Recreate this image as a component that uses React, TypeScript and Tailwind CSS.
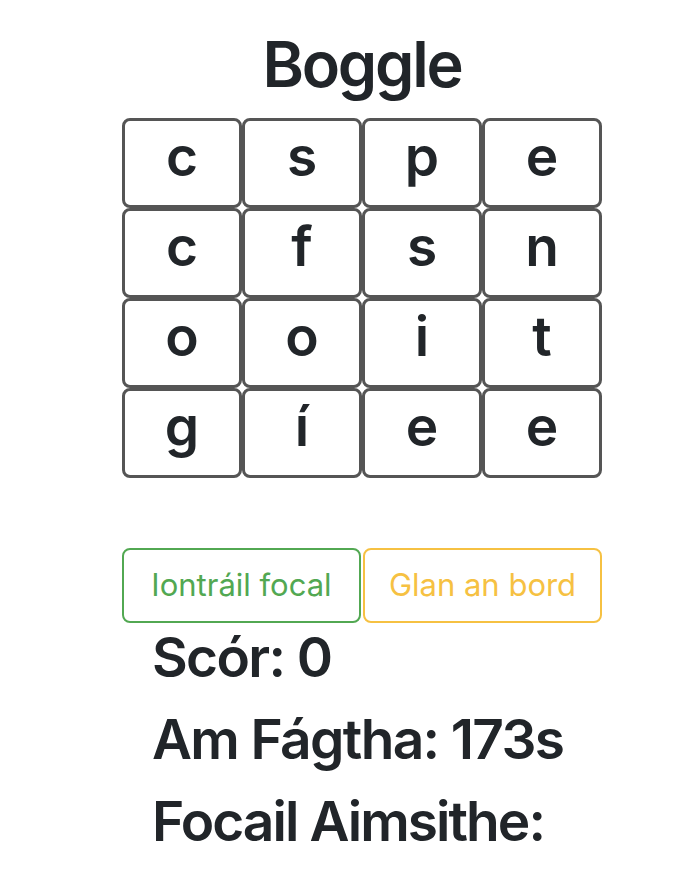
const letters = [
  ['c', 's', 'p', 'e'],
  ['c', 'f', 's', 'n'],
  ['o', 'o', 'i', 't'],
  ['g', 'í', 'e', 'e'],
];

export default function App() {
  return (
    <div className="min-h-screen bg-white text-[#212529] font-['Inter','Liberation_Sans',sans-serif]">
      <div className="ml-[122px] w-[480px] pt-[26px]">
        <h2 className="text-center text-[63px] leading-[77px] font-semibold tracking-[-0.035em] mb-[15px]">Boggle</h2>

        {/* board */}
        <div className="grid grid-cols-4">
          {letters.flat().map((l, i) => (
            <div
              key={i}
              className="h-[90px] border-[3px] border-[#555555] rounded-[8px] flex justify-center"
            >
              <span className="text-[55px] leading-[67px] font-semibold pt-[2px]">{l}</span>
            </div>
          ))}
        </div>

        <div className="grid grid-cols-2 gap-[2px] mt-[70px]">
          <button className="h-[75px] border-2 border-[#52a852] rounded-[8px] text-[#52a852] text-[31px]">
            Iontráil focal
          </button>
          <button className="h-[75px] border-2 border-[#f6c142] rounded-[8px] text-[#f6c142] text-[31px]">
            Glan an bord
          </button>
        </div>

        <div className="pl-[30px] pt-px">
          <h3 className="text-[55px] leading-[67px] font-semibold tracking-[-0.03em] mb-[15px]">Scór: 0</h3>
          <h3 className="text-[55px] leading-[67px] font-semibold tracking-[-0.03em] mb-[15px]">Am Fágtha: 173s</h3>
          <h3 className="text-[55px] leading-[67px] font-semibold tracking-[-0.035em] mb-[15px]">Focail Aimsithe:</h3>
        </div>
      </div>
    </div>
  );
}
